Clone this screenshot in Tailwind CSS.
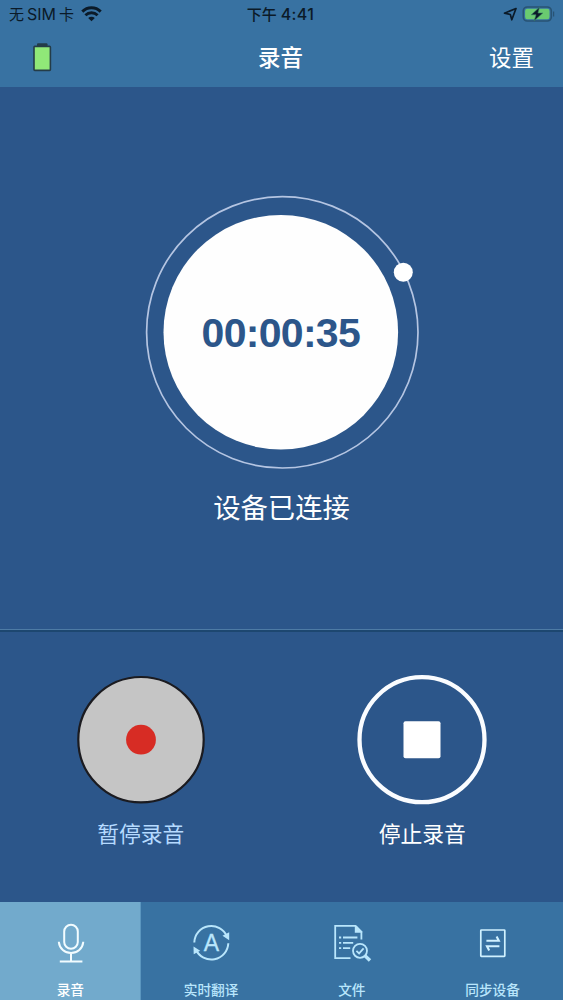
<!DOCTYPE html>
<html lang="zh-CN">

<head>
    <meta charset="UTF-8">
    <meta name="viewport" content="width=device-width, initial-scale=1.0">
    <script src="https://cdn.jsdelivr.net/npm/@tailwindcss/browser@4"></script>
    <title>录音</title>
</head>

<body class="w-[563px] h-[1000px] overflow-hidden flex flex-col bg-[#2c568a] text-white font-['Noto_Sans_CJK_SC',sans-serif]">

    <header class="h-[87px] shrink-0 bg-[#3872a2]">
        <!-- Status bar -->
        <div class="h-7 grid grid-cols-3 items-center pl-[9px] pr-2 text-[#0b1a28] leading-7">
            <div class="flex items-center gap-[7px]">
                <div class="flex items-center gap-[3px] text-[15px]">
                    <span>无</span>
                    <span class="font-['Inter',sans-serif] text-[16px]">SIM</span>
                    <span>卡</span>
                </div>
                <svg class="w-[21px] h-4" viewBox="0 0 21 16" fill="none" stroke="currentColor" stroke-width="2.9">
                    <path d="M1.3 5.6C6.4 0.5 14.6 0.5 19.7 5.6"></path>
                    <path d="M4.4 9.2C7.9 6 13.1 6 16.6 9.2"></path>
                    <path d="M7.2 12C9 10.3 12 10.3 13.8 12L10.5 15.3Z" fill="currentColor" stroke="none"></path>
                </svg>
            </div>
            <div class="flex items-center justify-center gap-1 -ml-[3px] text-[15px] font-medium">
                <span>下午</span>
                <span class="font-['Inter',sans-serif] text-[16px] tracking-[0.4px]">4:41</span>
            </div>
            <div class="flex items-center justify-end gap-[5px]">
                <svg class="w-[14px] h-[14px]" viewBox="0 0 14 14" fill="none" stroke="currentColor" stroke-width="1.7" stroke-linejoin="round">
                    <path d="M13 1.5L1.5 6.2L7.3 7.5L8.8 12.8Z"></path>
                </svg>
                <svg class="w-[33px] h-4" viewBox="0 0 33 16">
                    <rect x="1.3" y="1" width="28" height="14" rx="4" fill="none" stroke="#285374" stroke-width="1.6"></rect>
                    <rect x="3.1" y="2.8" width="24.4" height="10.4" rx="2.2" fill="#6acb70"></rect>
                    <path d="M17.5 1.2L9.2 8.8H14L12.2 14.8L20.8 7H16Z" fill="#0b1a28" stroke="#3a8668" stroke-width="0.6"></path>
                    <path d="M31.6 5.5V10.5" stroke="#285374" stroke-width="1.2"></path>
                </svg>
            </div>
        </div>
        <!-- Nav bar -->
        <div class="h-[59px] grid grid-cols-3 items-center pl-8 pr-[29px] text-[22.5px] leading-[58px]">
            <svg class="w-5 h-[30px]" viewBox="0 0 20 30">
                <rect x="5" y="0.2" width="10.5" height="4" rx="1" fill="#243c48"></rect>
                <rect x="2" y="3.4" width="16.4" height="24" rx="0.8" fill="#90e878" stroke="#243c48" stroke-width="1.6"></rect>
            </svg>
            <h1 class="-ml-[5px] -mt-[3px] text-center font-medium">录音</h1>
            <div class="-mt-[3px] text-right">设置</div>
        </div>
    </header>

    <main class="h-[542px] shrink-0 flex flex-col items-center pt-[107px]">
        <svg class="w-[276px] h-[276px]" viewBox="144 194 276 276">
            <circle cx="282.3" cy="332.3" r="135.7" fill="none" stroke="#b5c5e2" stroke-width="1.7"></circle>
            <circle cx="280.8" cy="332.2" r="117.3" fill="#fefefe"></circle>
            <circle cx="403.3" cy="272.2" r="9.5" fill="#ffffff"></circle>
            <text x="280.8" y="347.3" text-anchor="middle" class="font-['Liberation_Sans'] font-bold text-[41px] tracking-[-0.7px]" fill="#2c568a">00:00:35</text>
        </svg>
        <p class="mt-4 text-[27.3px] leading-10">设备已连接</p>
    </main>

    <section class="h-[273px] shrink-0 border-t border-[#4e7ba5]">
        <div class="h-full grid grid-cols-2 border-t-2 border-[#1d4770] pt-[42px] text-[21.8px] leading-8">
            <div class="flex flex-col items-center text-[#b5daff]">
                <svg class="w-[132px] h-[132px]" viewBox="0 0 132 132">
                    <circle cx="66" cy="65.7" r="62.7" fill="#c5c5c5" stroke="#1b1b20" stroke-width="2.2"></circle>
                    <circle cx="66" cy="65.7" r="14.9" fill="#d72c24"></circle>
                </svg>
                <span class="mt-[11px]">暂停录音</span>
            </div>
            <div class="flex flex-col items-center">
                <svg class="w-[132px] h-[132px]" viewBox="0 0 132 132">
                    <circle cx="66" cy="65.7" r="62.5" fill="none" stroke="#fafcff" stroke-width="4.3"></circle>
                    <rect x="47.5" y="47.2" width="37" height="37" rx="2" fill="#ffffff"></rect>
                </svg>
                <span class="mt-[11px]">停止录音</span>
            </div>
        </div>
    </section>

    <!-- Tab bar -->
    <nav class="h-[98px] shrink-0 grid grid-cols-4 bg-[#3872a2] text-[#b9e6fc] text-[13.7px] leading-5 font-medium">
        <div class="flex flex-col items-center pt-[18px] bg-[#72aacc] text-white border-r border-[#5b96bf]">
            <svg class="w-12 h-12" viewBox="0 0 48 48" fill="none" stroke="#f2fcff" stroke-width="2">
                <rect x="18.2" y="4.8" width="13.6" height="24" rx="6.8"></rect>
                <path d="M12.9 21.7V22.3A12.2 11.7 0 0 0 37.2 22.3V21.7M25 34V41.5M13.8 41.5H36.4"></path>
            </svg>
            <span class="mt-[11px] ml-px">录音</span>
        </div>
        <div class="flex flex-col items-center pt-[18px]">
            <svg class="w-12 h-12" viewBox="0 0 48 48" fill="none" stroke="currentColor" stroke-width="2">
                <path d="M7.3 22.5A17 17 0 0 1 40 16.5M41.3 23.2A17 17 0 0 1 8.8 29.5"></path>
                <path d="M35.5 15.8L42.2 12.3V20.2Z" fill="currentColor" stroke="none"></path>
                <path d="M6.5 26.5L13.2 30.8L6.7 34.3Z" fill="currentColor" stroke="none"></path>
                <text x="24.3" y="31" text-anchor="middle" class="font-['Liberation_Sans'] font-normal text-[23px]" fill="currentColor" stroke="currentColor" stroke-width="0.3">A</text>
            </svg>
            <span class="mt-[11px]">实时翻译</span>
        </div>
        <div class="flex flex-col items-center pt-[18px]">
            <svg class="w-12 h-12" viewBox="0 0 48 48" fill="none" stroke="currentColor" stroke-width="1.8">
                <path d="M22.5 38.2H7.2V5.9H27.2L33.4 11.8V19.5"></path>
                <path d="M26.8 5.6V12.8H34.2V11.5L28.5 5.6Z" fill="currentColor" stroke="none"></path>
                <path d="M11 17.5H13.2M15 17.5H29.4M11 22.8H13.2M15 22.8H25.2M11 28.2H13.2M15 28.2H22.2"></path>
                <circle cx="32" cy="30.8" r="7"></circle>
                <path d="M28.4 30.8L31.1 33.4L35.6 28.4"></path>
                <path d="M37 35.7L42 40.5" stroke-width="3.4"></path>
            </svg>
            <span class="mt-[11px]">文件</span>
        </div>
        <div class="flex flex-col items-center pt-[18px]">
            <svg class="w-12 h-12" viewBox="0 0 48 48" fill="none" stroke="#d0f1ff" stroke-width="1.7">
                <rect x="11.8" y="10" width="24" height="26.3" rx="0.6"></rect>
                <path d="M17.4 20.8H29.8L27.6 16.6M30.4 26.2H18L20.2 30.4" stroke-width="2.1"></path>
            </svg>
            <span class="mt-[11px]">同步设备</span>
        </div>
    </nav>

</body>

</html>
